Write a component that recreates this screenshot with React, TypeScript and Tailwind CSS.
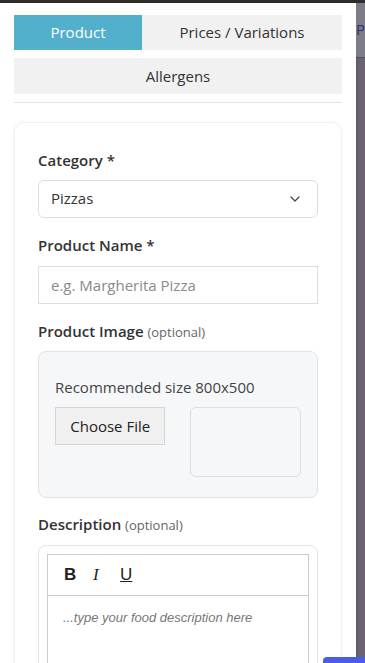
import { ChevronDown } from 'lucide-react';

const font = { fontFamily: '"Open Sans", Lato, sans-serif' };

export default function App() {
  return (
    <div className="relative h-[663px] w-[365px] overflow-hidden bg-[#6b6370]" style={font}>
      {/* top bar */}
      <div className="h-[3px] w-full bg-[#2e2e2e]" />

      <div className="flex h-[660px]">
        {/* modal */}
        <div className="w-[358px] overflow-hidden bg-white shadow-[1px_0_3px_rgba(0,0,0,0.15)]">
          <div className="px-[14px] pt-[12px]">
            {/* tabs */}
            <div className="flex h-[35px] text-[15px]">
              <div className="flex w-[128px] items-center justify-center bg-[#52b0cc] text-white">
                Product
              </div>
              <div className="flex flex-1 items-center justify-center bg-[#f1f1f1] text-[#333]">
                Prices / Variations
              </div>
            </div>
            <div className="mt-[8px] flex h-[36px] items-center justify-center bg-[#f1f1f1] text-[15px] text-[#333]">
              Allergens
            </div>
            <div className="mt-[8px] h-px bg-[#e4e4e4]" />

            {/* form card */}
            <div className="mt-[19px] rounded-[10px] border border-[#f0f0f0] px-[23px] pt-[26px] pb-10 shadow-[0_0_4px_rgba(0,0,0,0.04)]">
              <label className="block text-[15px] font-semibold text-[#333]">Category *</label>
              <div className="mt-[8px] flex h-[38px] items-center justify-between rounded-[6px] border border-[#dedede] pr-[14px] pl-[12px] text-[15px] text-[#333]">
                <span>Pizzas</span>
                <ChevronDown size={16} strokeWidth={1.8} className="text-[#444]" />
              </div>

              <label className="mt-[16px] block text-[15px] font-semibold text-[#333]">Product Name *</label>
              <div className="mt-[10px] flex h-[38px] items-center border border-[#dedede] px-[12px] text-[15px] text-[#8a8a8a]">
                e.g. Margherita Pizza
              </div>

              <label className="mt-[16px] block text-[15px] font-semibold text-[#333]">
                Product Image <span className="text-[13px] font-normal text-[#666]">(optional)</span>
              </label>
              <div className="mt-[8px] rounded-[8px] border border-[#e3e3e3] bg-[#f6f7f9] px-[16px] pt-[24px] pb-[20px]">
                <div className="text-[15px] text-[#444]">Recommended size 800x500</div>
                <div className="mt-[9px] flex gap-[25px]">
                  <div className="flex h-[38px] w-[111px] items-center justify-center border border-[#d6d6d6] bg-[#f0f0f0] text-[15px] text-[#222]">
                    Choose File
                  </div>
                  <div className="h-[70px] w-[111px] rounded-[6px] border border-[#dedede] bg-[#f6f7f9]" />
                </div>
              </div>

              <label className="mt-[15px] block text-[15px] font-semibold text-[#333]">
                Description <span className="text-[13px] font-normal text-[#666]">(optional)</span>
              </label>
              <div className="mt-[9px] rounded-[8px] border border-[#e3e3e3] p-[8px]">
                <div className="border border-[#cccccc]">
                  <div className="flex h-[41px] items-center border-b border-[#cccccc] pl-[16px] text-[17px] text-[#222]">
                    <span className="w-[29px] font-bold" style={{ fontFamily: '"Liberation Sans", sans-serif' }}>B</span>
                    <span className="w-[27px] italic" style={{ fontFamily: '"Liberation Serif", serif' }}>I</span>
                    <span className="underline" style={{ fontFamily: '"Liberation Sans", sans-serif' }}>U</span>
                  </div>
                  <div
                    className="h-[120px] px-[15px] pt-[12px] text-[13px] italic text-[#777]"
                    style={{ fontFamily: '"Liberation Sans", Arial, sans-serif' }}
                  >
                    ...type your food description here
                  </div>
                </div>
              </div>
            </div>
          </div>
        </div>

        {/* page behind the backdrop */}
        <div className="flex-1">
          <div className="h-[55px] border-b border-[#4b4f6a] bg-[#7d7c86] pt-[15px] text-[15px] text-[#2d2f7a]">P</div>
        </div>
      </div>

      <div className="absolute right-0 bottom-0 h-[6px] w-[42px] rounded-tl-[4px] bg-[#4b5ce6]" />
    </div>
  );
}
